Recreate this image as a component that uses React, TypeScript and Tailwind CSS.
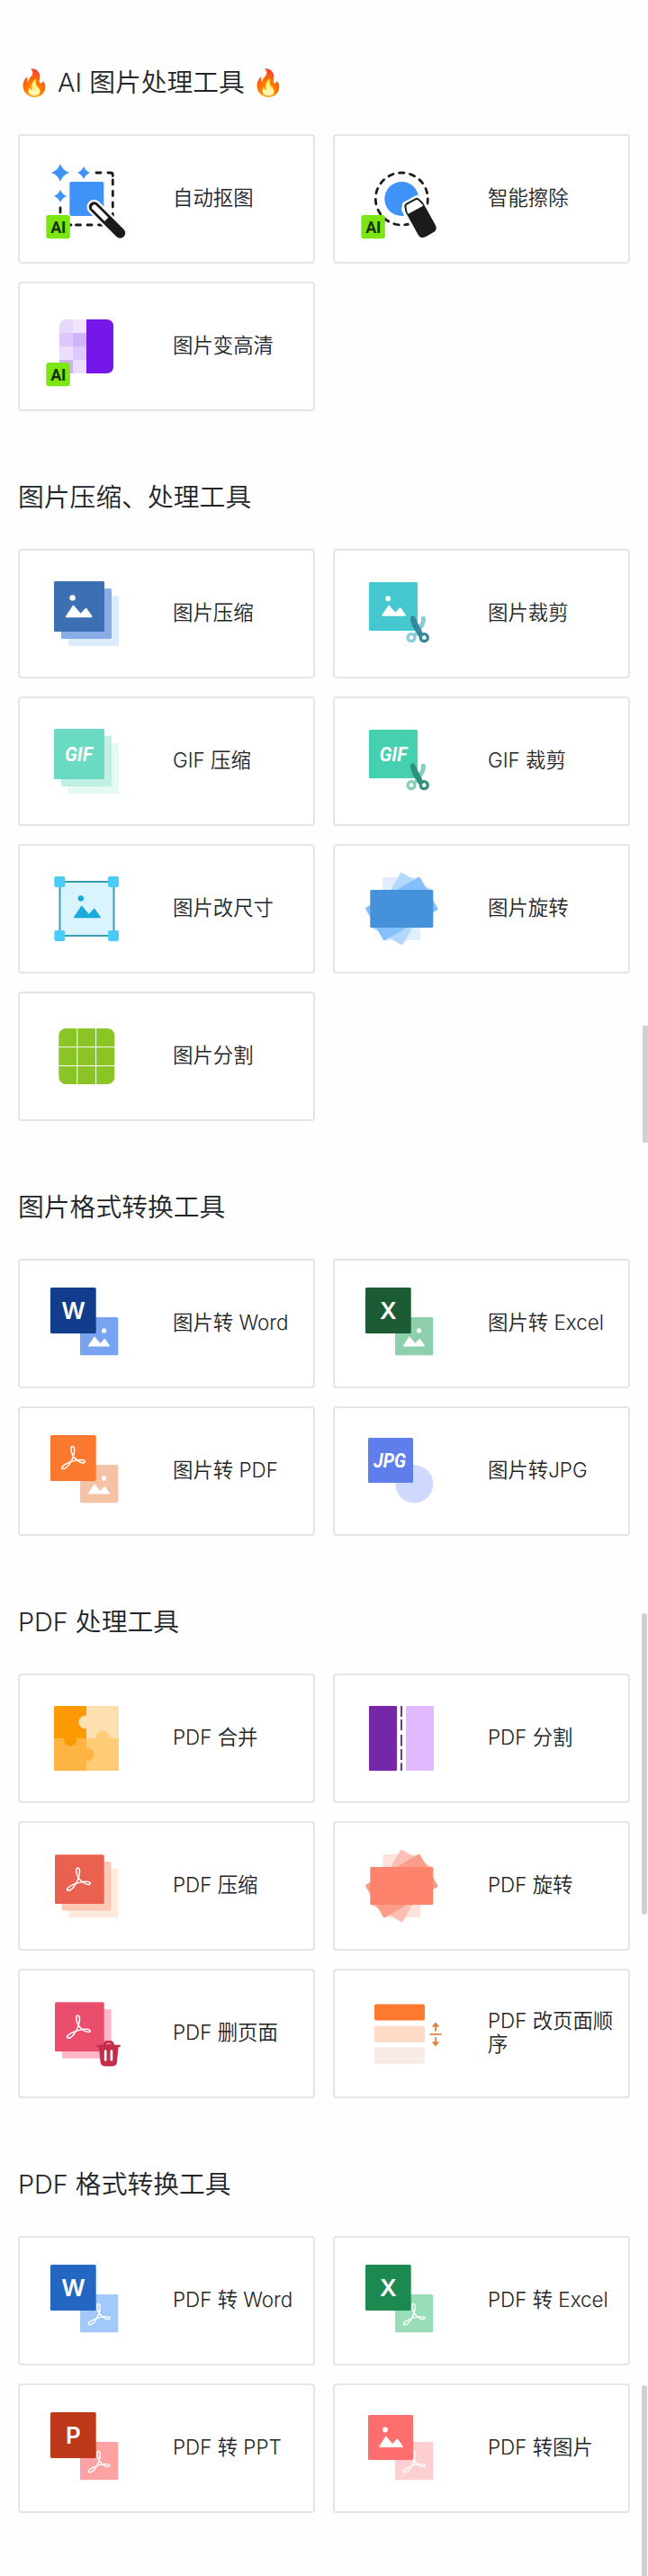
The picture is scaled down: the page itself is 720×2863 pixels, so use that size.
import type { ReactNode } from "react";

interface Tool {
  name: string;
  icon: ReactNode;
}

interface ToolGroup {
  title: string;
  tools: Tool[];
}

// All tool icons share the same 120x120 canvas
function Icon({ children }: { children: ReactNode }) {
  return (
    <svg viewBox="0 0 120 120" className="h-[120px] w-[120px] shrink-0" fill="none">
      {children}
    </svg>
  );
}

/* ---------- shared icon parts ---------- */

function AiBadge() {
  return (
    <>
      <rect x="15.3" y="78" width="26.5" height="26.3" rx="3" fill="#7CE612" />
      <text
        x="28.7"
        y="97.8"
        textAnchor="middle"
        textLength="17"
        fontSize="18"
        className="font-['Roboto',sans-serif] font-bold"
        fill="#15300A"
      >
        AI
      </text>
    </>
  );
}

function Picture({ x, y, size = 30, fill = "#fff", flip = false }: { x: number; y: number; size?: number; fill?: string; flip?: boolean }) {
  return (
    <g transform={`translate(${x} ${y}) scale(${size / 30})`} fill={fill}>
      <circle cx={flip ? 22 : 8} cy="3.2" r="3.2" />
      <path d="M1 25Q-.4 25 .5 23.6L8 12.2Q9 10.6 10 12.2L17 20.6L21.8 15.2Q23 13.8 24 15.2L29.8 23.6Q30.6 25 29 25Z" />
    </g>
  );
}

function Acrobat({ x, y, size = 27 }: { x: number; y: number; size?: number }) {
  return (
    <path
      transform={`translate(${x} ${y}) scale(${size / 27})`}
      d="M14 9C15 4 14.500 .8 12.500 .8C10.300 .8 10.300 5 12 9.500C14 14 19.500 19.300 24 19.300C27.500 19 27 16 22 16C16 16 10 18 5 20.500C0 23 -.5 26 2 26C6 26 12.500 17 14 9Z"
      stroke="#fff"
      strokeWidth="1.5"
    />
  );
}

function FormatText({ x, y, width, children }: { x: number; y: number; width: number; children: string }) {
  return (
    <text
      x={x}
      y={y}
      textLength={width}
      lengthAdjust="spacingAndGlyphs"
      fontSize="22"
      fill="#fff"
      className="font-['Roboto',sans-serif] font-bold italic"
    >
      {children}
    </text>
  );
}

function Stack({ colors, children }: { colors: [string, string, string]; children: ReactNode }) {
  return (
    <Icon>
      <rect x="40" y="40" width="56" height="56" rx="1.5" fill={colors[2]} />
      <rect x="32" y="32" width="56" height="56" rx="1.5" fill={colors[1]} />
      <rect x="24" y="24" width="56" height="56" rx="1.5" fill={colors[0]} />
      {children}
    </Icon>
  );
}

function Crop({ color, dark, light, children }: { color: string; dark: string; light: string; children: ReactNode }) {
  return (
    <Icon>
      <rect x="24" y="25" width="54" height="54" rx="1.5" fill={color} />
      {children}
      <path d="M84.3 65.3Q85 70 81 75L77 82" stroke={light} strokeWidth="5" strokeLinecap="round" />
      <circle cx="71" cy="86.7" r="4" stroke={light} strokeWidth="3.2" />
      <path d="M70.3 64Q72 61 74.5 63L82.5 79L84 82.5L79.5 86L77 81.5Q69 71 70.3 64Z" fill={dark} />
      <circle cx="85.3" cy="86.7" r="4" stroke={dark} strokeWidth="3.2" />
    </Icon>
  );
}

function Rotate({ colors }: { colors: [string, string, string, string] }) {
  return (
    <Icon>
      <rect x="25.3" y="39" width="70" height="42" rx="1.5" transform="rotate(90 60.3 60)" fill={colors[3]} />
      <rect x="25.3" y="39" width="70" height="42" rx="1.5" transform="rotate(-60 60.3 60)" fill={colors[2]} />
      <rect x="25.3" y="39" width="70" height="42" rx="1.5" transform="rotate(-30 60.3 60)" fill={colors[1]} />
      <rect x="25.3" y="39" width="70" height="42" rx="1.5" fill={colors[0]} />
    </Icon>
  );
}

function Convert({ letter, color, light, from }: { letter?: string; color: string; light: string; from: "image" | "pdf" }) {
  return (
    <Icon>
      <rect x="53" y="53" width="42.3" height="42.3" rx="1.5" fill={light} />
      {from === "image" ? <Picture x={61.7} y={65.3} size={24.3} flip /> : <Acrobat x={61.8} y={62.8} size={25} />}
      <rect x="20" y="20" width="50.7" height="51" rx="1.5" fill={color} />
      {letter ? (
        <text
          x="45.4"
          y="55"
          textAnchor="middle"
          fontSize="26"
          fill="#fff"
          className="font-['Inter',sans-serif] font-semibold"
        >
          {letter}
        </text>
      ) : (
        <Acrobat x={32.2} y={31.6} />
      )}
    </Icon>
  );
}

/* ---------- single use icons ---------- */

function CutoutIcon() {
  return (
    <Icon>
      <path d="M31 21Q33.5 28.5 41 31Q33.5 33.5 31 41Q28.5 33.5 21 31Q28.5 28.5 31 21Z" fill="#3F93F8" />
      <path d="M57 24Q59 29 64 31Q59 33 57 38Q55 33 50 31Q55 29 57 24Z" fill="#3F93F8" />
      <path d="M31 50Q33 55 38 57Q33 59 31 64Q29 59 24 57Q29 55 31 50Z" fill="#3F93F8" />
      <rect x="41.3" y="41" width="38" height="38" rx="2" fill="#3F93F8" />
      <g stroke="#1B1B1B" strokeWidth="2.8" strokeLinecap="round">
        <path d="M71 31H76" />
        <path d="M84 31H87Q89.3 31 89.3 33.5V34.5" />
        <path d="M89.3 39V44M89.3 51.5V56.5M89.3 64V69M89.3 76.5V81" />
        <path d="M31 70V75" />
        <path d="M78 89H73.5M66 89H61M53.5 89H48.5M43 89H41" />
      </g>
      <path d="M68.5 69L97.5 98" stroke="#fff" strokeWidth="16" strokeLinecap="round" />
      <path d="M68.5 69L97.5 98" stroke="#1B1B1B" strokeWidth="11.5" strokeLinecap="round" />
      <path d="M69 69.5L82 82.5" stroke="#fff" strokeWidth="6" strokeLinecap="round" />
      <path d="M85.6 79.4L78.6 86.4L84 92L91.5 85Z" fill="#1B1B1B" />
      <AiBadge />
    </Icon>
  );
}

function EraserIcon() {
  return (
    <Icon>
      <circle cx="60.3" cy="60" r="29" stroke="#1B1B1B" strokeWidth="2.8" strokeLinecap="round" strokeDasharray="5.5 6.65" />
      <circle cx="60.3" cy="60" r="19" fill="#3F93F8" />
      <g transform="translate(80.7 81) rotate(-29)">
        <path d="M-8.5 -23H8.5L13 -17V16Q13 24 5 24H-5Q-13 24 -13 16V-17Z" fill="#fff" stroke="#fff" strokeWidth="2" strokeLinejoin="round" />
        <path d="M-6 -21.5H6Q8 -21.5 9 -19.5L11 -14V15Q11 21.5 4.5 21.5H-4.5Q-11 21.5 -11 15V-14L-9 -19.5Q-8 -21.5 -6 -21.5Z" fill="#1B1B1B" />
        <path d="M-5.5 -19.5H5.5Q7 -19.5 7.5 -18L9.5 -12V-10H-9.5V-12L-7.5 -18Q-7 -19.5 -5.5 -19.5Z" fill="#fff" />
      </g>
      <AiBadge />
    </Icon>
  );
}

function UpscaleIcon() {
  return (
    <Icon>
      <path d="M45 30H38Q30 30 30 38V45H45Z" fill="#E7D9FB" />
      <path d="M45 30H60V45H45Z" fill="#F0E4FE" />
      <path d="M30 45H45V60H30Z" fill="#DDC7FC" />
      <path d="M45 45H60V60H45Z" fill="#D2B2F8" />
      <path d="M30 60H45V75H30Z" fill="#ECDFFE" />
      <path d="M45 60H60V75H45Z" fill="#DFC8FC" />
      <path d="M30 75H45V90H30Z" fill="#CDB3EC" />
      <path d="M45 75H60V90H45Z" fill="#EADDFD" />
      <path d="M60 30H82Q90 30 90 38V82Q90 90 82 90H60Z" fill="#7517E8" />
      <AiBadge />
    </Icon>
  );
}

function ResizeIcon() {
  return (
    <Icon>
      <rect x="30.5" y="30" width="60" height="60" fill="#D9F4FC" stroke="#3A9BB2" strokeWidth="2" />
      <rect x="24.3" y="24" width="12" height="12" rx="2" fill="#4ACBF8" />
      <rect x="84" y="24" width="12" height="12" rx="2" fill="#4ACBF8" />
      <rect x="24.3" y="84" width="12" height="12" rx="2" fill="#4ACBF8" />
      <rect x="84" y="84" width="12" height="12" rx="2" fill="#4ACBF8" />
      <Picture x={45.8} y={45.3} size={30} fill="#16ABDC" />
    </Icon>
  );
}

function GridIcon() {
  return (
    <Icon>
      <rect x="29.3" y="29" width="62" height="62" rx="8" fill="#8AC425" />
      <path d="M49.8 29V91M70.6 29V91M29 49.7H92M29 70.6H92" stroke="#fff" />
    </Icon>
  );
}

function JpgIcon() {
  return (
    <Icon>
      <circle cx="74.3" cy="74.3" r="21" fill="#CFD8FD" />
      <rect x="23" y="23" width="50" height="50" rx="1.5" fill="#5F7EEC" />
      <FormatText x={29} y={56.4} width={36}>
        JPG
      </FormatText>
    </Icon>
  );
}

function MergeIcon() {
  return (
    <Icon>
      <path d="M25.5 24H60V60H24V25.5Q24 24 25.5 24Z" fill="#FC9A03" />
      <path d="M60 24H94.5Q96 24 96 25.5V60H60Z" fill="#FEDFAF" />
      <path d="M24 60H60V96H25.5Q24 96 24 94.5Z" fill="#FEB443" />
      <path d="M60 60H96V94.5Q96 96 94.5 96H60Z" fill="#FFCB74" />
      <path d="M60 34.8A7.3 7.3 0 1 0 60 49.2Z" fill="#FEDFAF" />
      <path d="M34.8 60A7.3 7.3 0 1 0 49.2 60Z" fill="#FC9A03" />
      <path d="M70.8 60A7.3 7.3 0 1 1 85.2 60Z" fill="#FFCB74" />
      <path d="M60 70.8A7.3 7.3 0 1 1 60 85.2Z" fill="#FEB443" />
    </Icon>
  );
}

function SplitIcon() {
  return (
    <Icon>
      <rect x="24" y="24" width="31" height="72" rx="1" fill="#7627A8" />
      <rect x="65" y="24" width="31" height="72" rx="1" fill="#E1B9FE" />
      <path d="M60 24V36M60 39V51M60 56V68.4M60 72V84M60 87.3V96" stroke="#6C3A86" strokeWidth="2" />
    </Icon>
  );
}

function PdfCompressIcon() {
  return (
    <Icon>
      <rect x="40.7" y="40.7" width="54.5" height="54.5" rx="1" fill="#FEEADE" />
      <rect x="32.8" y="33" width="54.5" height="54.5" rx="1" fill="#FDC9B5" />
      <rect x="25" y="25.3" width="54.7" height="54.7" rx="1.5" fill="#EA6150" />
      <Acrobat x={38} y={39.2} />
    </Icon>
  );
}

function PdfDeleteIcon() {
  return (
    <Icon>
      <rect x="32.8" y="33" width="54.8" height="54.8" rx="1" fill="#FFB7C8" />
      <rect x="25" y="25.3" width="54.7" height="54.7" rx="1.5" fill="#EB4E6D" />
      <Acrobat x={38} y={39.2} />
      <path
        d="M72.3 72.8H78.5Q79.5 68 82.5 68H87Q90 68 91 72.8H97Q98.2 73 98 74Q97.5 75.2 95.5 75.2L94 91.5Q93.5 96.4 88.5 96.4H81Q76 96.4 75.5 91.5L74 75.2Q71.5 75.2 71.3 74Z"
        fill="#C52B4B"
      />
      <path d="M81.5 72.3Q82 70.3 83.5 70.3H86Q87.5 70.3 88 72.3Z" fill="#EB7A90" />
      <path d="M81.2 79.5V89.5M87.9 79.5V89.5" stroke="#fff" strokeWidth="2.7" strokeLinecap="round" />
    </Icon>
  );
}

function ReorderIcon() {
  return (
    <Icon>
      <rect x="30" y="27.4" width="56" height="18.2" rx="2" fill="#FD792E" />
      <rect x="30" y="51.5" width="56" height="18.2" rx="2" fill="#FDDBC5" />
      <rect x="30" y="75.6" width="56" height="18.2" rx="1" fill="#F9ECE6" />
      <path d="M92.5 60.8H104M98 57V52M98 65V70" stroke="#E8803F" strokeWidth="1.8" strokeLinecap="round" />
      <path d="M98 47.6L102.3 52.8H93.7ZM98 74.6L102.3 69.2H93.7Z" fill="#E8803F" />
    </Icon>
  );
}

const groups: ToolGroup[] = [
  {
    title: "🔥 AI 图片处理工具 🔥",
    tools: [
      { name: "自动抠图", icon: <CutoutIcon /> },
      { name: "智能擦除", icon: <EraserIcon /> },
      { name: "图片变高清", icon: <UpscaleIcon /> },
    ],
  },
  {
    title: "图片压缩、处理工具",
    tools: [
      {
        name: "图片压缩",
        icon: (
          <Stack colors={["#3D70B2", "#89AEE6", "#DCEBFD"]}>
            <Picture x={36.6} y={39.2} />
          </Stack>
        ),
      },
      {
        name: "图片裁剪",
        icon: (
          <Crop color="#45C8CF" dark="#34889A" light="#86CDD8">
            <Picture x={38} y={40.3} size={27} />
          </Crop>
        ),
      },
      {
        name: "GIF 压缩",
        icon: (
          <Stack colors={["#6ADBC2", "#C0EFE4", "#E4F9F4"]}>
            <FormatText x={36} y={60} width={31}>
              GIF
            </FormatText>
          </Stack>
        ),
      },
      {
        name: "GIF 裁剪",
        icon: (
          <Crop color="#45D0B0" dark="#2F8F7B" light="#84CFBC">
            <FormatText x={35.4} y={60.2} width={31}>
              GIF
            </FormatText>
          </Crop>
        ),
      },
      { name: "图片改尺寸", icon: <ResizeIcon /> },
      { name: "图片旋转", icon: <Rotate colors={["#4592DB", "#86C0FC", "#B3D8FB", "#E0EEFC"]} /> },
      { name: "图片分割", icon: <GridIcon /> },
    ],
  },
  {
    title: "图片格式转换工具",
    tools: [
      { name: "图片转 Word", icon: <Convert letter="W" color="#123C8C" light="#78A3F0" from="image" /> },
      { name: "图片转 Excel", icon: <Convert letter="X" color="#1B5C35" light="#8ED0AD" from="image" /> },
      { name: "图片转 PDF", icon: <Convert color="#FD782F" light="#F5C2A6" from="image" /> },
      { name: "图片转JPG", icon: <JpgIcon /> },
    ],
  },
  {
    title: "PDF 处理工具",
    tools: [
      { name: "PDF 合并", icon: <MergeIcon /> },
      { name: "PDF 分割", icon: <SplitIcon /> },
      { name: "PDF 压缩", icon: <PdfCompressIcon /> },
      { name: "PDF 旋转", icon: <Rotate colors={["#FD836C", "#FD9D89", "#FBC0B3", "#FDE3DC"]} /> },
      { name: "PDF 删页面", icon: <PdfDeleteIcon /> },
      { name: "PDF 改页面顺序", icon: <ReorderIcon /> },
    ],
  },
  {
    title: "PDF 格式转换工具",
    tools: [
      { name: "PDF 转 Word", icon: <Convert letter="W" color="#2367C3" light="#A3C9FC" from="pdf" /> },
      { name: "PDF 转 Excel", icon: <Convert letter="X" color="#1B8950" light="#98DDB8" from="pdf" /> },
      { name: "PDF 转 PPT", icon: <Convert letter="P" color="#BE381A" light="#FDA2A2" from="pdf" /> },
      {
        name: "PDF 转图片",
        icon: (
          <Icon>
            <rect x="53" y="53" width="42.3" height="42.3" rx="1.5" fill="#FDCFD0" />
            <Acrobat x={61.8} y={62.8} size={25} />
            <rect x="23" y="23" width="50" height="50" rx="1.5" fill="#FF6E6F" />
            <Picture x={34.8} y={36.5} size={27} />
          </Icon>
        ),
      },
    ],
  },
];

function ToolCard({ name, icon }: Tool) {
  return (
    <a className="flex h-36 items-center rounded-[4px] border-2 border-[#e4e5e7] bg-white pl-3.5">
      {icon}
      <span className="-mt-[3px] ml-9 w-[146px] text-[22.4px] leading-[26px]">{name}</span>
    </a>
  );
}

function App() {
  return (
    <div className="relative h-[2863px] w-[720px] overflow-hidden bg-[#fefefe] px-5 pt-[72px] font-['Inter','Noto_Sans_CJK_SC',sans-serif] font-[360] text-[#212529]">
      {groups.map((group) => (
        <section key={group.title} className="mb-[76px]">
          <h2 className="mb-[37px] h-10 text-[28.8px] leading-10 whitespace-nowrap">{group.title}</h2>
          <div className="grid grid-cols-2 gap-5">
            {group.tools.map((tool) => (
              <ToolCard key={tool.name} {...tool} />
            ))}
          </div>
        </section>
      ))}

      {/* Scroll thumbs */}
      <div className="absolute top-[1140px] right-0 h-[130px] w-1.5 bg-[#d1d1d1]" />
      <div className="absolute top-[1793px] right-px h-[335px] w-1.5 rounded-full bg-[#cfcfcf]" />
      <div className="absolute top-[2651px] right-px h-[212px] w-1.5 rounded-t-full bg-[#d1d1d1]" />
    </div>
  );
}

export default App;
